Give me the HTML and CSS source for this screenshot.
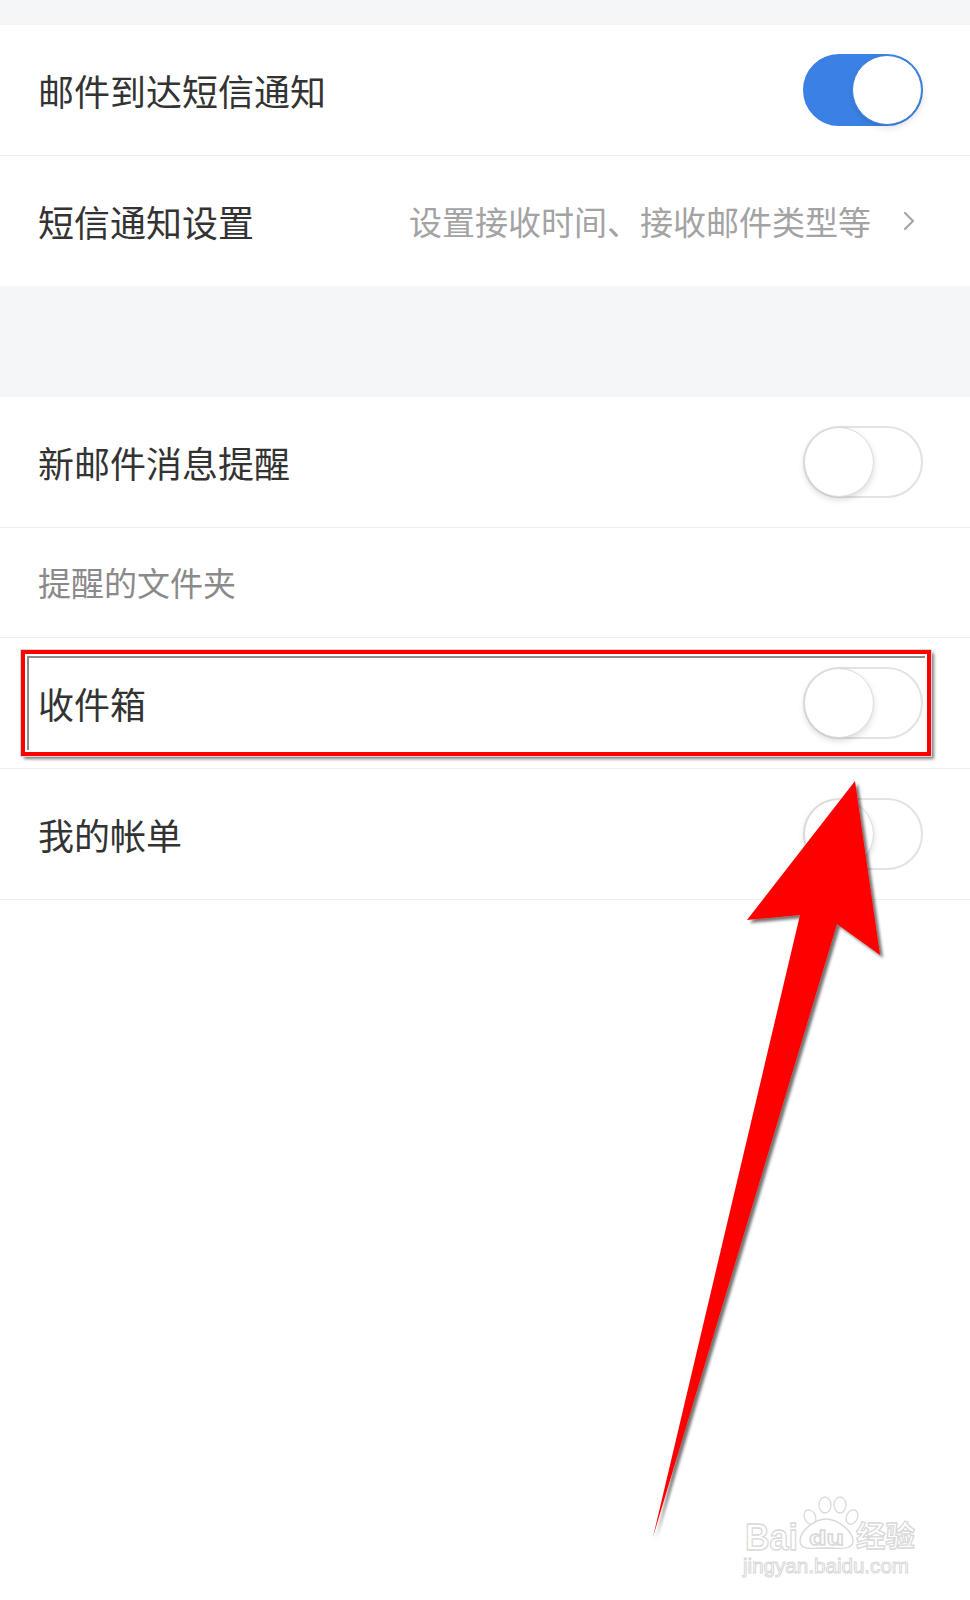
FILE: index.html
```html
<!DOCTYPE html>
<html lang="zh-CN">
<head>
<meta charset="utf-8">
<title>通知设置</title>
<link rel="stylesheet" href="styles.css">
</head>
<body>
<div class="page">
  <div class="spacer spacer-top"></div>

  <section class="group">
    <div class="row">
      <span class="label">邮件到达短信通知</span>
      <span class="switch on"><span class="knob"></span></span>
    </div>
    <div class="row last">
      <span class="label">短信通知设置</span>
      <span class="detail">
        <span class="hint">设置接收时间、接收邮件类型等</span>
        <svg class="chevron" viewBox="0 0 12 20" width="12" height="20"><polyline points="2,2 10,10 2,18" fill="none" stroke="#a6a6a6" stroke-width="2.2" stroke-linecap="round" stroke-linejoin="round"/></svg>
      </span>
    </div>
  </section>

  <div class="spacer spacer-mid"></div>

  <section class="group">
    <div class="row">
      <span class="label">新邮件消息提醒</span>
      <span class="switch"><span class="knob"></span></span>
    </div>
    <div class="row caption">
      <span class="caption-text">提醒的文件夹</span>
    </div>
    <div class="row">
      <span class="label">收件箱</span>
      <span class="switch"><span class="knob"></span></span>
    </div>
    <div class="row">
      <span class="label">我的帐单</span>
      <span class="switch"><span class="knob"></span></span>
    </div>
  </section>

  <div class="highlight"></div>

  <svg class="overlay" viewBox="0 0 970 1600" width="970" height="1600">
    <defs>
      <filter id="arrowShadow" x="-20%" y="-20%" width="140%" height="140%">
        <feDropShadow dx="3" dy="3" stdDeviation="1.6" flood-color="#000" flood-opacity="0.55"/>
      </filter>
    </defs>
    <!-- pointer arrow -->
    <polygon filter="url(#arrowShadow)" fill="#ff0000"
      points="855,781 880,955 837,924 653,1537 800,915 747,920"/>

    <!-- site mark -->
    <g class="mark" fill="#ffffff" stroke="#d9d9d9" stroke-width="1.3">
      <text x="745" y="1550" font-family="Liberation Sans, Arial, sans-serif" font-size="37" font-weight="bold" textLength="53" lengthAdjust="spacingAndGlyphs">Bai</text>
      <ellipse cx="810" cy="1517" rx="5.5" ry="7.5" transform="rotate(-25 810 1517)"/>
      <ellipse cx="825" cy="1505" rx="6" ry="8"/>
      <ellipse cx="840" cy="1505" rx="6" ry="8"/>
      <ellipse cx="852" cy="1517" rx="5.5" ry="7.5" transform="rotate(25 852 1517)"/>
      <path d="M800,1541 C800,1530 816,1519 826,1519 C836,1519 853,1530 853,1541 C853,1549 844,1549 826,1548 C808,1549 800,1549 800,1541 Z"/>
      <text x="809" y="1545" font-family="Liberation Sans, Arial, sans-serif" font-size="20" font-weight="bold" textLength="35" lengthAdjust="spacingAndGlyphs">du</text>
      <text x="856" y="1547" font-family="Noto Sans CJK SC, sans-serif" font-size="29" font-weight="bold" textLength="59" lengthAdjust="spacingAndGlyphs">经验</text>
      <text x="743" y="1573" font-family="Liberation Sans, Arial, sans-serif" font-size="20" stroke-width="1" textLength="166" lengthAdjust="spacingAndGlyphs">jingyan.baidu.com</text>
    </g>
  </svg>
</div>
</body>
</html>
```

FILE: styles.css
```css
* {
  box-sizing: border-box;
}

html,
body {
  margin: 0;
  padding: 0;
  background: #ffffff;
}

body {
  font-family: "Noto Sans CJK SC", "Noto Sans", sans-serif;
  color: #333333;
}

.page {
  position: relative;
  width: 970px;
  height: 1600px;
  overflow: hidden;
  background: #ffffff;
}

.spacer {
  background: #f5f6f8;
}

.spacer-top {
  height: 25px;
}

.spacer-mid {
  height: 111px;
}

.group {
  display: flex;
  flex-direction: column;
  background: #ffffff;
}

.row {
  display: flex;
  align-items: center;
  justify-content: space-between;
  height: 131px;
  padding: 0 47px 0 38px;
  border-bottom: 1px solid #eeeeee;
}

.row.last {
  height: 130px;
  border-bottom: none;
}

.label {
  font-size: 36px;
  line-height: 1;
  color: #333333;
}

.row.caption {
  height: 110px;
}

.caption-text {
  font-size: 33px;
  line-height: 1;
  color: #8a8a8a;
}

.detail {
  display: flex;
  align-items: center;
  gap: 32px;
  margin-right: 8px;
}

.hint {
  font-size: 33px;
  line-height: 1;
  color: #a3a3a3;
}

.chevron {
  display: block;
}

/* toggle switch */
.switch {
  position: relative;
  display: flex;
  align-items: center;
  width: 120px;
  height: 72px;
  border-radius: 36px;
  background: #ffffff;
  border: 2px solid #e3e3e3;
  padding: 0;
}

.switch .knob {
  width: 70px;
  height: 70px;
  margin-left: -1px;
  border-radius: 50%;
  background: #ffffff;
  border: 1px solid #dcdcdc;
  box-shadow: 0 3px 6px rgba(0, 0, 0, 0.14);
}

.switch.on {
  background: #3b80e4;
  border-color: #3b80e4;
  justify-content: flex-end;
}

.switch.on .knob {
  margin-left: 0;
  margin-right: -1px;
  border: 1px solid #3b80e4;
  box-shadow: 1px 3px 6px rgba(0, 0, 0, 0.12);
}

/* annotation frame around the inbox row */
.highlight {
  position: absolute;
  left: 21px;
  top: 650px;
  width: 910px;
  height: 106px;
  border: 4px solid #ff0000;
  box-shadow:
    inset 0 0 0 2px #ffffff,
    inset 1px 1px 0 3px #8c8c8c,
    0 0 0 1px #d6d6d6,
    3px 3px 3px rgba(0, 0, 0, 0.5);
  pointer-events: none;
}

.overlay {
  position: absolute;
  left: 0;
  top: 0;
  pointer-events: none;
}
```
